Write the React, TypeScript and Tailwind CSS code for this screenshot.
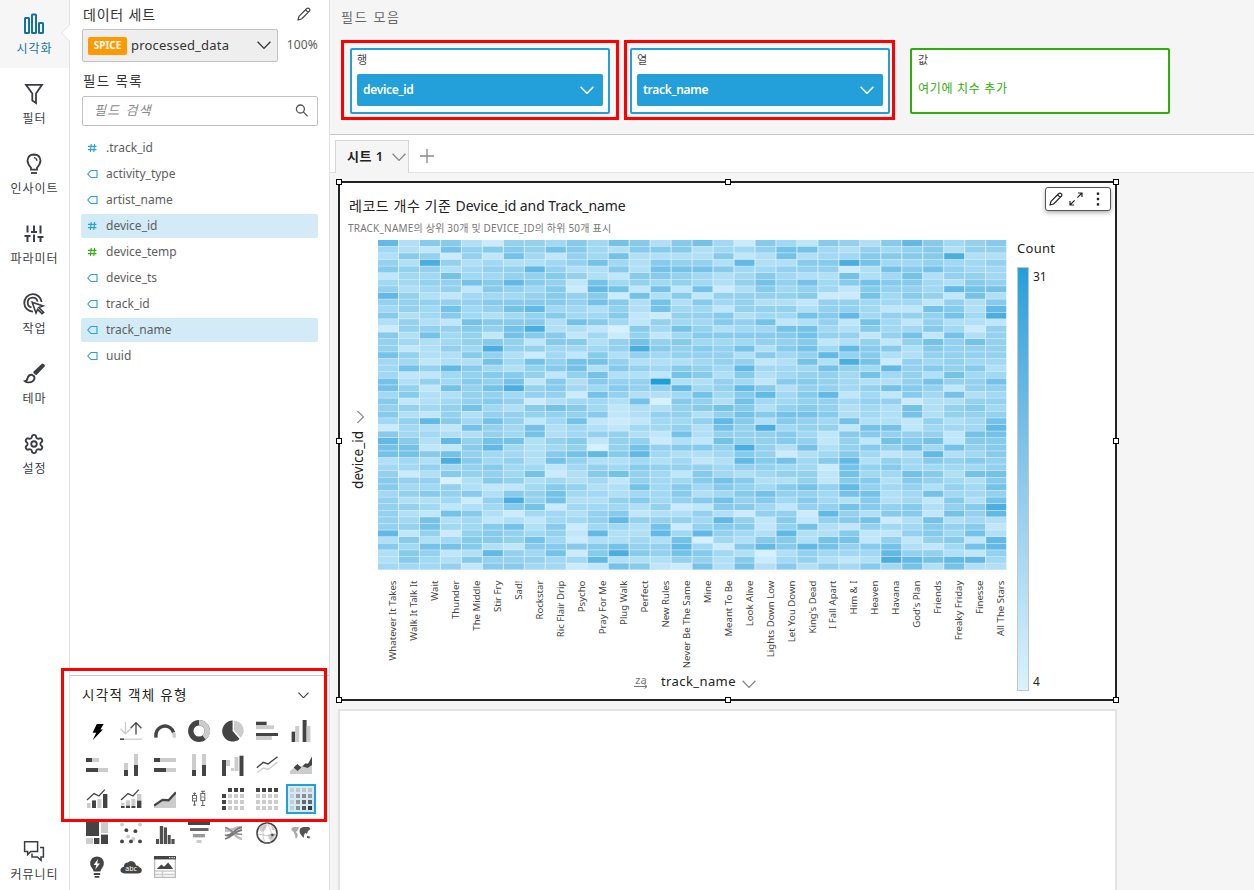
import React from "react";
import { Settings } from "lucide-react";

const D = "#444444";
const L = "#cccccc";

const ROWS = [
  "836631554647636741642653686456",
  "432756657643666344577435456355",
  "365152742547333362373446666933",
  "539534334574365538336697445445",
  "655345585336377764455513767544",
  "244744556532665434643373473554",
  "445576865274545435757467664365",
  "534526546187272713645426554877",
  "853244456561736255556117465273",
  "555556666576373645332554442536",
  "454745784435374425553554227638",
  "634643456446215563447684555749",
  "353276663764254465723527425332",
  "155565793320647534477436446415",
  "637452766241524666667552572735",
  "543456526635756444556235257575",
  "523549554445965657367486636555",
  "753365314263545553645856335555",
  "442337475775333455237397154544",
  "475864356736546548444754856563",
  "422456652573327636345547453744",
  "7354657263655A3354266543357557",
  "752757956446558458635545765255",
  "463355455175334746846824264734",
  "623456513443706537445545513355",
  "554574367642335676356534373564",
  "632535555562355357677634373555",
  "458647524721244586365473325347",
  "143275473432445375945527724448",
  "644335473455327355564266555277",
  "863857735625513275565252767266",
  "772268434505756659537356574756",
  "776754436786843346513464238346",
  "343964537533434238674683546565",
  "445456442454655545544175644445",
  "513655471367542643455274476377",
  "655036534342544676335266365436",
  "644532246533746465467585453547",
  "456563657443446346755477347445",
  "533415957335645675646436342637",
  "554234671444351266425576563569",
  "532763144356233531551853662758",
  "547342324458555485262567137343",
  "557446736144371566257325446562",
  "825156545283384854383362256473",
  "363466574133437043663772525628",
  "647763266667558416868756732478",
  "365238547169657643035444855325",
  "364365554483335536145323987884",
  "444526644127621737363546473733",
];

const SHADES: Record<string, string> = {
  "0": "#d6f0fd",
  "1": "#cbebfc",
  "2": "#bfe6f9",
  "3": "#b0dff6",
  "4": "#a1d8f3",
  "5": "#93d1ef",
  "6": "#87cbec",
  "7": "#75c2e8",
  "8": "#62b9e5",
  "9": "#4caee0",
  A: "#1f9fd8",
};

const TRACKS = [
  "Whatever It Takes", "Walk It Talk It", "Wait", "Thunder", "The Middle", "Stir Fry", "Sad!", "Rockstar",
  "Ric Flair Drip", "Psycho", "Pray For Me", "Plug Walk", "Perfect", "New Rules", "Never Be The Same", "Mine",
  "Meant To Be", "Look Alive", "Lights Down Low", "Let You Down", "King's Dead", "I Fall Apart", "Him & I",
  "Heaven", "Havana", "God's Plan", "Friends", "Freaky Friday", "Finesse", "All The Stars",
];

function Chevron({ className = "", w = 14, sw = 1.3 }: { className?: string; w?: number; sw?: number }) {
  return (
    <svg width={w} height={w * 0.6} viewBox="0 0 14 8.4" className={className} fill="none" stroke="currentColor" strokeWidth={sw}>
      <path d="M0.6 0.8 L7 7.4 L13.4 0.8" />
    </svg>
  );
}

function Pencil({ className = "" }: { className?: string }) {
  return (
    <svg width="14" height="14" viewBox="0 0 14 14" className={className} fill="none" stroke="currentColor" strokeWidth="1.2" strokeLinejoin="round">
      <path d="M1 13 L2 9.3 L9.8 1.5 Q11 0.5 12.2 1.7 Q13.4 2.9 12.4 4.1 L4.6 12 Z M8.6 2.8 L11.2 5.4" />
    </svg>
  );
}

const RAIL: { label: string; icon: React.ReactNode }[] = [
  {
    label: "시각화",
    icon: (
      <g fill="none" stroke="currentColor" strokeWidth="2">
        <rect x="2" y="5" width="4" height="15" rx="0.5" />
        <rect x="9" y="1.5" width="4" height="18.5" rx="0.5" />
        <rect x="16" y="10" width="4" height="10" rx="0.5" />
      </g>
    ),
  },
  {
    label: "필터",
    icon: <path d="M3 1.8 H19 L13 10.5 V20 L9.3 17.6 V10.5 Z" fill="none" stroke="currentColor" strokeWidth="1.8" />,
  },
  {
    label: "인사이트",
    icon: (
      <g fill="none" stroke="currentColor" strokeWidth="1.8">
        <path d="M8 16.6 V14.8 Q4.5 11 4.5 7.6 Q5 1.6 11 1.5 Q17 1.6 17.5 7.6 Q17.5 11 14 14.8 V16.6 Z" />
        <path d="M8 20 H14" />
        <path d="M11 4.6 Q13.6 5 14 7.8" strokeWidth="1.3" />
      </g>
    ),
  },
  {
    label: "파라미터",
    icon: (
      <g fill="none" stroke="currentColor" strokeWidth="2">
        <path d="M4.5 2.5 V9.5 M4.5 12 V19 M1.5 13 H7.5 M11 2.5 V8 M8 9 H14 M11 11.5 V19 M17.5 2.5 V10.5 M17.5 14 V19 M14.5 14 H20.5" />
      </g>
    ),
  },
  {
    label: "작업",
    icon: (
      <g fill="none" stroke="currentColor" strokeWidth="1.8">
        <path d="M10 18.6 A8.7 8.7 0 1 1 18.6 9" />
        <path d="M8.5 14.4 A5 5 0 1 1 14.6 8.6" />
        <path d="M9.2 9.2 L20 13 L15.8 14.6 L20.6 19.4 L19 20.6 L14.6 16.4 L13 20 Z" fill="white" strokeWidth="1.6" />
      </g>
    ),
  },
  {
    label: "테마",
    icon: (
      <g>
        <path d="M19.6 2 L20.4 2.8 L13 10.4 L11.8 9.2 Z" fill="currentColor" stroke="currentColor" strokeWidth="2.8" strokeLinejoin="round" />
        <path d="M2 18.2 Q4.2 17.7 4.6 15 Q5.5 11.6 9 11.8 Q12 12.9 11.4 15.9 Q9.8 19.7 5.4 19.4 Q3.3 19.2 2 18.2 Z" fill="none" stroke="currentColor" strokeWidth="1.9" />
      </g>
    ),
  },
  { label: "설정", icon: <Settings x={0} y={0} width={22} height={22} strokeWidth={2} /> },
];

const CHAT = (
  <g fill="none" stroke="currentColor" strokeWidth="1.5">
    <path d="M1.6 1.8 H14.6 V11.4 H7.8 L4.6 14.6 V11.4 H1.6 Z" />
    <path d="M17 7.6 H20.4 V17 H18 V20.4 L14.4 17 H9 V13.6" />
  </g>
);

function RailItem({ label, icon, active }: { label: string; icon: React.ReactNode; active?: boolean }) {
  return (
    <div className={`h-[70px] w-full flex flex-col items-center pt-[13px] ${active ? "text-[#17719f]" : "text-[#3a3d42]"}`}>
      <svg width="22" height="22" viewBox="0 0 22 22">{icon}</svg>
      <div className="mt-[6px] pl-px text-[12px] leading-[16px] tracking-[0.9px] whitespace-nowrap">{label}</div>
    </div>
  );
}

const FIELDS: [string, "hash" | "tag", boolean, boolean][] = [
  [".track_id", "hash", false, false],
  ["activity_type", "tag", false, false],
  ["artist_name", "tag", false, false],
  ["device_id", "hash", true, false],
  ["device_temp", "hash", false, true],
  ["device_ts", "tag", false, false],
  ["track_id", "tag", false, false],
  ["track_name", "tag", true, false],
  ["uuid", "tag", false, false],
];

type R = [number, number, number, number, string];
const bars = (list: R[]) => list.map(([x, y, w, h, f], i) => <rect key={i} x={x} y={y} width={w} height={h} fill={f} />);

const grid = (color: (r: number, c: number) => string) =>
  [0, 1, 2, 3].flatMap((r) =>
    [0, 1, 2, 3].map((c) => <rect key={`${r}${c}`} x={c * 6} y={r * 6} width="4" height="4" fill={color(r, c)} />)
  );

const HEAT_ICON = [
  ["#ccc", "#c4c4c4", "#c4c4c4", "#c4c4c4"],
  ["#ccc", "#999", "#8c8c8c", "#999"],
  ["#ccc", "#999", "#666", "#666"],
  ["#ccc", "#8c8c8c", "#555", "#3a3a3a"],
];

const VISUALS: React.ReactNode[] = [
  <path d="M10.8 4 H17.7 L14.4 9.4 H17 L6.6 20.2 L10.2 12.8 H6.6 Z" fill="#000" />,
  <g fill="none" strokeWidth="1.3">
    <path d="M5.5 2 V13.4 M0.5 8.8 L5.5 13.8 L10.5 8.8" stroke={L} />
    <path d="M16 14.5 V2.6 M10.6 8.2 L16 2.6 L21.4 8.2" stroke={D} />
    <path d="M4 19.2 H22" stroke={L} />
    <path d="M0 19.2 H4" stroke={D} strokeWidth="1.6" />
  </g>,
  <g fill="none" strokeWidth="3.4">
    <path d="M2 17.6 Q1.2 10.5 6 7.6 Q11 4.5 16 7.6 Q18.6 9.4 19.6 12.6" stroke={D} />
    <path d="M19.6 12.6 Q20.4 15 20.2 17.6" stroke={L} />
  </g>,
  <g fill="none" strokeWidth="5.4">
    <circle cx="11" cy="11" r="8.2" stroke={D} />
    <path d="M11 2.8 A8.2 8.2 0 0 1 16 17.5" stroke={L} />
  </g>,
  <g>
    <path d="M10.6 0.6 A10.5 10.5 0 1 0 17.6 19 L10.6 11 Z" fill={D} />
    <path d="M12 0.8 A10 10 0 0 1 18.8 17.8 L12 10.4 Z" fill={L} />
  </g>,
  bars([[0, 1.7, 10.6, 3.6, D], [0, 5.3, 18, 3.9, L], [0, 13, 22, 3, D], [0, 16, 15.8, 4, L]]),
  bars([[1.6, 11.6, 3.6, 10.4, D], [5.2, 6, 4, 16, L], [12.6, 0, 4, 22, D], [16.6, 6, 3.8, 16, L]]),

  bars([[0, 4, 6, 4, D], [6, 4, 7, 4, L], [0, 14, 12, 4, D], [12, 14, 10, 4, L]]),
  bars([[4, 9, 4, 7, L], [4, 16, 4, 6, D], [14, 0, 4, 11, L], [14, 11, 4, 11, D]]),
  bars([[0, 4, 6, 4, D], [6, 4, 16, 4, L], [0, 14, 12, 4, D], [12, 14, 10, 4, L]]),
  bars([[4, 0, 4, 16, L], [4, 16, 4, 6, D], [14, 0, 4, 11, L], [14, 11, 4, 11, D]]),
  bars([[0, 6, 4, 16, D], [4, 6, 4, 6, L], [9, 14, 3, 3, L], [12.5, 3, 4, 14, L], [17.5, 1.7, 4, 20.3, D]]),
  <g fill="none" strokeWidth="1.4">
    <path d="M1 18.5 L7.5 14 L12 15.5 L21.5 8" stroke={L} />
    <path d="M0.8 13.8 L7.2 8.4 L12 10 L21.5 2.8" stroke={D} />
  </g>,
  <g>
    <path d="M0 20 V17 L3.6 14 L12 12 L16 9 L22 11 V20 Z" fill={L} />
    <path d="M3.6 13.6 L7.4 10 L11.4 13.6 L7.6 17 Z M12.4 12.2 L15.4 9.4 L18 9.8 L22 2.4 V11 L17.6 14 Z" fill={D} />
  </g>,

  <g>
    {bars([[1, 15, 3.6, 5, L], [6, 12.4, 4, 7.6, D], [11.4, 11, 4, 9, L], [17, 6, 4.4, 14, D]])}
    <path d="M1 12 L8 5.6 L13 8 L18.8 1.6" fill="none" stroke={D} strokeWidth="1.3" />
  </g>,
  <g>
    {bars([[1, 15, 3.6, 2.6, L], [1, 18, 3.6, 2, D], [6, 12.4, 4, 5, L], [6, 17.6, 4, 2.4, D], [11.4, 11, 4, 7, L], [11.4, 18, 4, 2, D], [17, 6, 4.4, 6.6, L], [17, 12.6, 4.4, 7.4, D]])}
    <path d="M1 12 L8 5.6 L13 8 L18.8 1.6" fill="none" stroke={D} strokeWidth="1.3" />
  </g>,
  <g>
    <path d="M0 20 V17.4 L8.5 12.4 L14.6 12.8 L22 5 V20 Z" fill={L} />
    <path d="M0 17.6 L8.5 11.8 L14.6 12.2 L22 4.4" fill="none" stroke={D} strokeWidth="2.3" />
  </g>,
  <g fill="none" stroke="#666">
    <path d="M6.5 4.5 V7 M5 5.5 H8 M6.5 13 V17.5 M5 17 H8 M14.8 2.8 V5.5 M13 3.3 H17 M14.8 12.5 V18 M13 17.5 H17" />
    <rect x="4.5" y="7.5" width="4" height="5.5" />
    <rect x="12.8" y="5.5" width="4" height="7" />
    <path d="M4.5 10.5 H8.5 M12.8 9 H16.8" stroke="#999" />
  </g>,
  grid((r, c) => (r + c === 0 ? "none" : r === 0 || c === 0 ? D : L)),
  grid((r) => (r === 0 ? D : L)),
  grid((r, c) => HEAT_ICON[r][c]),

  bars([[0, 0, 13, 14, D], [15, 0, 7, 11, L], [0, 16, 7, 6, L], [8, 16, 5.4, 6, D], [15, 12.6, 7, 9.4, D]]),
  <g>
    {[[2, 2.6, L], [20, 2.6, L], [6.4, 8.2, D], [15.4, 9.2, D], [8, 14.6, L], [13.4, 17, L], [2, 19.4, D], [11, 19.4, D], [20, 19.4, D]].map(
      ([x, y, f], i) => <circle key={i} cx={x} cy={y} r="1.9" fill={f as string} />
    )}
  </g>,
  bars([[2, 17, 3, 5, "#505050"], [5.8, 4, 3.3, 18, "#505050"], [9.8, 5.4, 3.2, 16.6, "#505050"], [13.7, 13, 3, 9, "#505050"], [17.4, 17, 3.2, 5, "#505050"]]),
  bars([[0, 0, 22, 3, D], [2, 6, 18.5, 3, "#666"], [5, 12, 12, 3.4, "#999"], [8.6, 18, 5, 3, L]]),
  <g fill="none">
    <path d="M3 6 C9 6 13 16 20 17 M3 9 C9 9 13 5 20 5" stroke="#bbb" strokeWidth="2.4" />
    <path d="M3 17 C10 15 13 9 20 8 M3 13 C9 16 13 5 20 5.6" stroke="#777" strokeWidth="1.8" />
    <path d="M3 5.5 C9 6 11 14 20 12" stroke="#888" strokeWidth="1.4" />
  </g>,
  <g>
    <circle cx="11" cy="11" r="10" fill="white" stroke="#444" strokeWidth="1.6" />
    <path d="M3 6 Q6 2 11 3 L9 8 L5 10 Z M12 13 L17 11 L20 12 L17 18 L13 17 Z M15 2.5 L20 8 L16 8 Z" fill={L} />
    <path d="M1 12 Q11 15 21 12 M11 1 Q4 10 9 21 M11 1 Q18 10 14 21" fill="none" stroke="#aaa" strokeWidth="0.6" />
    <circle cx="16.4" cy="13" r="1.2" fill={D} />
  </g>,
  <g>
    <path d="M1.5 6 L4 5 L9 5 L8 8 L6 10 L7.6 12 L7.4 15 L5.8 17 L5 13 L3.6 10 L1.5 8 Z" fill="#aaa" />
    <path d="M10 6.5 L13 5 L19 5 L20.5 7 L18 9 L17 12 L15.6 11 L14.4 12 L13.6 16 L12 14 L10 11.5 L9.6 9 Z M17 14 L20 14.4 L19.4 16.4 L17 16 Z" fill="#555" />
    <path d="M7 5 L10 4.6 L9 6.6 Z" fill={L} />
  </g>,

  <g>
    <path d="M7.6 15.6 Q7.4 13.2 5.6 11.4 Q3.7 9 4.2 6 Q5.4 0.6 11 0.4 Q16.8 0.6 17.8 6 Q18.3 9 16.4 11.4 Q14.8 13.2 14.4 15.6 Z" fill={D} />
    <path d="M12 3 L7.6 9 H10.4 L9.2 13.6 L14 7.4 H11.2 Z" fill="white" />
    <path d="M7.8 18 H14.2 M8.6 20.8 H13.4" stroke={D} strokeWidth="1.8" />
  </g>,
  <g>
    <path d="M4.5 17.6 Q0.2 17 0.4 13.8 Q0.8 11.2 3.8 10.8 Q4.2 6.6 8 6.6 Q9.6 4.6 12 5.2 Q15.6 6 16 9.6 Q18.4 9 19.2 11.2 Q22 11.8 21.8 14.6 Q21.4 17.4 18 17.6 Z" fill={D} />
    <text x="11" y="15.4" fontSize="7" textAnchor="middle" fill="white" fontFamily="Noto Sans, sans-serif">abc</text>
  </g>,
  <g>
    <rect x="0.6" y="0.6" width="20.8" height="20.8" fill="white" stroke="#bbb" strokeWidth="1.4" />
    <rect width="22" height="3.4" fill={D} />
    <path d="M15 1.7 H16.4 M17.4 1.7 H18.8 M19.6 1.7 H21" stroke="white" />
    <path d="M2.8 13 L7.4 8.4 L10 10.8 L14.2 6.6 L19.2 13 Z" fill={D} />
    <path d="M1 15 H21 M1 18.4 H21 M8.5 15 V21" stroke={L} strokeWidth="1.5" />
  </g>,
];

function FieldWell({ label, value }: { label: string; value: string }) {
  return (
    <div className="w-[260px] h-[66px] border-2 border-[#239fd9] rounded-[2px] bg-white px-[5px] pt-[2px]">
      <div className="text-[11px] leading-[16px] h-[22px] text-[#444]">{label}</div>
      <div className="h-8 bg-[#239fd9] rounded-[2px] flex items-center justify-between pl-[6px] pr-[9px] text-white">
        <span className="text-[12px] font-semibold tracking-[-0.3px]">{value}</span>
        <Chevron w={14} sw={1.5} />
      </div>
    </div>
  );
}

function Heatmap() {
  return (
    <svg width="650" height="430" viewBox="378 240 650 430" fontFamily="Noto Sans, sans-serif" className="block">
      <rect x="378" y="240" width="628.6" height="330" fill="#d9effb" />
      {ROWS.map((row, r) =>
        row.split("").map((v, c) => (
          <rect key={`${r}-${c}`} x={378 + c * 20.97} y={240 + r * 6.6} width="20" height="6" fill={SHADES[v]} />
        ))
      )}
      {TRACKS.map((t, c) => (
        <text key={t} transform={`translate(${396.1 + c * 20.97} 580.6) rotate(-90)`} textAnchor="end" fontSize="9.6" fill="#444">
          {t}
        </text>
      ))}
    </svg>
  );
}

const HANDLES = [
  "left-[-4px] top-[-4px]", "left-[385px] top-[-4px]", "right-[-4px] top-[-4px]",
  "left-[-4px] top-[255px]", "right-[-4px] top-[255px]",
  "left-[-4px] bottom-[-4px]", "left-[385px] bottom-[-4px]", "right-[-4px] bottom-[-4px]",
];

export default function App() {
  return (
    <div className="relative w-[1254px] h-[890px] overflow-hidden bg-[#f5f5f5] flex text-[#333] font-['Noto_Sans','Noto_Sans_CJK_KR',sans-serif]">
      <nav className="relative w-[70px] shrink-0 h-full bg-white border-r border-[#e1e1e1] flex flex-col">
        <div className="absolute top-0 left-0 w-[69px] h-[68px] bg-[#f6f6f6]" />
        <svg className="absolute left-[60px] top-[24px]" width="10" height="18" viewBox="0 0 10 18">
          <path d="M10 0.5 L1.5 9 L10 17.5" fill="white" stroke="#e1e1e1" />
        </svg>
        <div className="relative w-[68px] flex-1">
          {RAIL.map((it, i) => <RailItem key={it.label} {...it} active={i === 0} />)}
        </div>
        <div className="relative w-[68px] h-[50px] flex flex-col items-center text-[#3a3d42]">
          <svg width="22" height="22" viewBox="0 0 22 22">{CHAT}</svg>
          <div className="mt-[5px] pl-px text-[12px] leading-[16px] tracking-[0.9px] whitespace-nowrap">커뮤니티</div>
        </div>
      </nav>

      <aside className="w-[260px] shrink-0 h-full bg-white border-r border-[#e1e1e1] flex flex-col">
        <div className="pl-[12px] pr-[11px] flex flex-col">
          <div className="flex items-center justify-between h-[29px] pl-px pr-[7px]">
            <span className="text-[14px] tracking-[0.8px]">데이터 세트</span>
            <Pencil className="text-[#444] mb-[2px]" />
          </div>
          <div className="flex items-center justify-between">
            <div className="w-[196px] h-[33px] border border-[#c2c2c2] rounded-[2px] bg-[#eeeeee] flex items-center pl-[5px] pr-[6px]">
              <span className="w-[39px] h-[18px] rounded-[2px] bg-[#ff9900] text-white font-bold text-[10px] flex items-center justify-center">SPICE</span>
              <span className="ml-[4px] text-[13px] tracking-[0.2px] flex-1">processed_data</span>
              <Chevron w={14} className="text-[#333]" />
            </div>
            <span className="text-[12px] text-[#5a5a5a] tracking-[0.2px] pb-px">100%</span>
          </div>
          <div className="h-[34px] flex items-center text-[13.5px] tracking-[1.4px] pt-[4px] pl-px">필드 목록</div>
          <div className="h-[30px] border border-[#c2c2c2] rounded-[2px] flex items-center justify-between pl-[11px] pr-[9px]">
            <span className="italic text-[13px] text-[#8a8a8a] tracking-[1.4px]">필드 검색</span>
            <svg width="13" height="13" viewBox="0 0 13 13" fill="none" stroke="#555" strokeWidth="1.3" className="mb-[2px]">
              <circle cx="5.4" cy="5" r="4" />
              <path d="M8.3 7.9 L12.6 12.2" />
            </svg>
          </div>
        </div>
        <div className="mt-[10px] pl-[11px] pr-[11px] flex flex-col gap-[2px]">
          {FIELDS.map(([name, kind, on, green]) => (
            <div key={name} className={`h-6 rounded-[2px] flex items-center pl-[6px] ${on ? "bg-[#d3eaf7]" : ""}`}>
              <svg width="11" height="10" viewBox="0 0 11 10" fill="none" stroke={green ? "#2eae08" : "#2ba0d5"}>
                {kind === "hash" ? <path d="M4.2 1 L3.4 9 M7.6 1 L6.8 9 M1 3.4 H9.4 M1 6.6 H9.4" strokeWidth="1.1" /> : <path d="M10 1.5 H4 L0.8 5 L4 8.5 H10 Z" strokeWidth="1.1" />}
              </svg>
              <span className="ml-[8px] text-[12px] text-[#5e5e5e]">{name}</span>
            </div>
          ))}
        </div>
        <div className="flex-1" />
        <div className="h-[215px] border-t border-[#c8c8c8] pl-[12px]">
          <div className="h-[38px] flex items-center justify-between pr-[20px]">
            <span className="text-[13.5px] tracking-[1.3px] text-[#222]">시각적 객체 유형</span>
            <Chevron w={11} className="text-[#333]" />
          </div>
          <div className="grid grid-cols-[repeat(7,34px)] auto-rows-[34px] -ml-[2px]">
            {VISUALS.map((v, i) => (
              <div key={i} className="flex items-center justify-center">
                <div className={`w-[30px] h-[30px] flex items-center justify-center ${i === 20 ? "border-2 border-[#239fd9] bg-[#d3eaf7]" : ""}`}>
                  <svg width="22" height="22" viewBox="0 0 22 22">{v}</svg>
                </div>
              </div>
            ))}
          </div>
        </div>
      </aside>

      <main className="flex-1 h-full flex flex-col min-w-0">
        <section className="h-[135px] shrink-0 border-b border-[#c8c8c8]">
          <div className="h-[48px] pl-[11px] pt-[7px] text-[13px] leading-[20px] tracking-[1.7px] text-[#666]">필드 모음</div>
          <div className="pl-[20px] flex gap-[20px]">
            <FieldWell label="행" value="device_id" />
            <FieldWell label="열" value="track_name" />
            <div className="w-[260px] h-[66px] border-2 border-[#2eae08] rounded-[2px] bg-white px-[6px] pt-[2px]">
              <div className="text-[11px] leading-[16px] text-[#444]">값</div>
              <div className="mt-[12px] text-[12px] leading-[18px] tracking-[0.7px] text-[#2eae08]">여기에 치수 추가</div>
            </div>
          </div>
        </section>

        <div className="h-[38px] shrink-0 bg-white border-b border-[#e1e1e1] flex items-end pl-[5px]">
          <div className="w-[74px] h-[33px] -mb-px bg-[#f5f5f5] border border-b-0 border-[#d6d6d6] flex items-center justify-between pl-[11px] pr-[2px]">
            <span className="text-[13px] font-semibold tracking-[0.5px] text-[#222] whitespace-nowrap">시트 1</span>
            <Chevron w={14} className="text-[#888]" />
          </div>
          <svg className="ml-[11px] mb-[9px]" width="14" height="14" viewBox="0 0 14 14" stroke="#888" strokeWidth="1.3">
            <path d="M7 0 V14 M0 7 H14" />
          </svg>
        </div>

        <section className="pl-[8px] pt-[8px] flex flex-col gap-[8px]">
          <div className="relative w-[779px] h-[520px] shrink-0 border-2 border-[#222] bg-white">
            <div className="absolute right-[4px] top-[4px] w-[66px] h-[24px] rounded-[3px] border border-[#555] bg-white shadow-[0_2px_4px_rgba(0,0,0,0.3)] flex items-center text-[#222]">
              <Pencil className="ml-[3px]" />
              <svg className="ml-[6px]" width="14" height="14" viewBox="0 0 14 14" fill="none" stroke="currentColor" strokeWidth="1.2">
                <path d="M8.4 5.6 L13 1 M9 1 H13 V5 M5.6 8.4 L1 13 M1 9 V13 H5" />
              </svg>
              <svg className="ml-[13px]" width="4" height="14" viewBox="0 0 4 14" fill="currentColor">
                <rect x="0.8" y="0.5" width="2.4" height="2.4" /><rect x="0.8" y="5.8" width="2.4" height="2.4" /><rect x="0.8" y="11.2" width="2.4" height="2.4" />
              </svg>
            </div>
            <div className="pt-[12px] pl-[9px] h-[57px]">
              <div className="text-[14px] leading-[22px] text-[#222] whitespace-nowrap">
                <span className="tracking-[0.55px]">레코드 개수 기준 </span>
                <span className="tracking-[-0.1px]">Device_id and Track_name</span>
              </div>
              <div className="-ml-px mt-[2px] text-[10px] leading-[18px] text-[#777] whitespace-nowrap tracking-[0.2px]">TRACK_NAME의 상위 30개 및 DEVICE_ID의 하위 50개 표시</div>
            </div>
            <div className="flex">
              <div className="w-[38px] h-[430px] flex flex-col items-center pt-[173px]">
                <Chevron w={13} className="-rotate-90 text-[#888] ml-[2px]" />
                <div className="mt-[10px] mr-[2px] [writing-mode:vertical-rl] rotate-180 text-[13.5px] leading-[20px] text-[#222]">device_id</div>
              </div>
              <div className="w-[639px] overflow-hidden"><Heatmap /></div>
              <div>
                <div className="h-[27px] text-[13px] leading-[16px] tracking-[0.3px] text-[#222]">Count</div>
                <div className="flex">
                  <div className="w-[12px] h-[424px] border border-[#c4c4c4] bg-linear-to-b from-[#219fd8] to-[#daf2fd]" />
                  <div className="ml-[4px] h-[424px] flex flex-col justify-between text-[12px] leading-[18px] text-[#222]">
                    <span className="pt-px">31</span>
                    <span>4</span>
                  </div>
                </div>
              </div>
            </div>
            <div className="absolute left-[294px] bottom-[7px] h-[20px] flex items-center">
              <div className="flex flex-col items-center text-[#777]">
                <span className="text-[11px] leading-[9px]">za</span>
                <svg width="14" height="5" viewBox="0 0 14 5" fill="none" stroke="currentColor"><path d="M0 2.5 H13 M10.5 0.4 L13 2.5 L10.5 4.6" /></svg>
              </div>
              <span className="ml-[13px] text-[13px] tracking-[0.4px] text-[#222]">track_name</span>
              <Chevron w={14} className="ml-[6px] mt-[4px] text-[#888]" />
            </div>
            {HANDLES.map((h) => <span key={h} className={`absolute w-[6px] h-[6px] bg-white border border-black ${h}`} />)}
          </div>
          <div className="w-[779px] h-[200px] shrink-0 border-2 border-[#e3e3e3] bg-white" />
        </section>
      </main>

      <div className="absolute left-[341px] top-[40px] w-[278px] h-[80px] border-3 border-[#ff0000]" />
      <div className="absolute left-[624px] top-[40px] w-[271px] h-[80px] border-3 border-[#ff0000]" />
      <div className="absolute left-[61px] top-[668px] w-[266px] h-[154px] border-3 border-[#ff0000]" />
    </div>
  );
}
